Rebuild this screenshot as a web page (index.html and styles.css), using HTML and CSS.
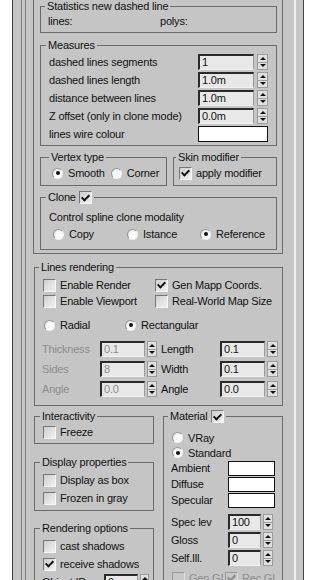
FILE: index.html
```html
<!DOCTYPE html>
<html lang="en">
<head>
    <meta charset="UTF-8">
    <title>Dashed lines</title>
    <link rel="stylesheet" href="styles.css">
</head>
<body>
<div class="frame">
  <div class="rollout">
    <div class="sheet">

      <fieldset class="grp outer">
        <fieldset class="grp stats">
          <legend>Statistics new dashed line</legend>
          <div class="stats-row"><span class="stat-lines">lines:</span><span>polys:</span></div>
        </fieldset>

        <fieldset class="grp measures">
          <legend>Measures</legend>
          <div class="row"><span class="lbl">dashed lines segments</span><span class="fld">1</span><span class="arr"><i></i><i></i></span></div>
          <div class="row"><span class="lbl">dashed lines length</span><span class="fld">1.0m</span><span class="arr"><i></i><i></i></span></div>
          <div class="row"><span class="lbl">distance between lines</span><span class="fld">1.0m</span><span class="arr"><i></i><i></i></span></div>
          <div class="row"><span class="lbl">Z offset (only in clone mode)</span><span class="fld">0.0m</span><span class="arr"><i></i><i></i></span></div>
          <div class="row"><span class="lbl">lines wire colour</span><span class="swatch wire"></span></div>
        </fieldset>

        <div class="pair">
          <fieldset class="grp vertex">
            <legend>Vertex type</legend>
            <div class="opts">
              <label class="opt smooth"><span class="rd on"></span>Smooth</label>
              <label class="opt"><span class="rd"></span>Corner</label>
            </div>
          </fieldset>
          <fieldset class="grp skin">
            <legend>Skin modifier</legend>
            <label class="chk"><span class="cb on"></span>apply modifier</label>
          </fieldset>
        </div>

        <fieldset class="grp clone">
          <legend class="leg-chk">Clone <span class="cb on"></span></legend>
          <div class="clone-text">Control spline clone modality</div>
          <div class="opts clone-opts">
            <label class="opt w74"><span class="rd"></span>Copy</label>
            <label class="opt w73"><span class="rd"></span>Istance</label>
            <label class="opt"><span class="rd on"></span>Reference</label>
          </div>
        </fieldset>
      </fieldset>

      <fieldset class="grp lines">
        <legend>Lines rendering</legend>
        <div class="two">
          <label class="chk"><span class="cb"></span>Enable Render</label>
          <label class="chk"><span class="cb on"></span>Gen Mapp Coords.</label>
          <label class="chk"><span class="cb"></span>Enable Viewport</label>
          <label class="chk"><span class="cb"></span>Real-World Map Size</label>
        </div>
        <div class="opts shape">
          <label class="opt w81"><span class="rd"></span>Radial</label>
          <label class="opt"><span class="rd on"></span>Rectangular</label>
        </div>
        <div class="dims">
          <div class="dim off"><span class="lbl">Thickness</span><span class="fld">0.1</span><span class="arr"><i></i><i></i></span></div>
          <div class="dim right"><span class="lbl">Length</span><span class="fld">0.1</span><span class="arr"><i></i><i></i></span></div>
          <div class="dim off"><span class="lbl">Sides</span><span class="fld">8</span><span class="arr"><i></i><i></i></span></div>
          <div class="dim right"><span class="lbl">Width</span><span class="fld">0.1</span><span class="arr"><i></i><i></i></span></div>
          <div class="dim off"><span class="lbl">Angle</span><span class="fld">0.0</span><span class="arr"><i></i><i></i></span></div>
          <div class="dim right"><span class="lbl">Angle</span><span class="fld">0.0</span><span class="arr"><i></i><i></i></span></div>
        </div>
      </fieldset>

      <div class="lower">
        <div class="col-left">
          <fieldset class="grp small interact">
            <legend>Interactivity</legend>
            <label class="chk"><span class="cb"></span>Freeze</label>
          </fieldset>
          <fieldset class="grp small display">
            <legend>Display properties</legend>
            <label class="chk r18"><span class="cb"></span>Display as box</label>
            <label class="chk r18"><span class="cb"></span>Frozen in gray</label>
          </fieldset>
          <fieldset class="grp small render">
            <legend>Rendering options</legend>
            <label class="chk r18"><span class="cb"></span>cast shadows</label>
            <label class="chk r18"><span class="cb on"></span>receive shadows</label>
            <div class="row r18 objid"><span class="lbl">Object ID</span><span class="fld">0</span><span class="arr"><i></i><i></i></span></div>
          </fieldset>
        </div>

        <fieldset class="grp material">
          <legend class="leg-chk">Material <span class="cb on"></span></legend>
          <label class="opt r15"><span class="rd"></span>VRay</label>
          <label class="opt r15"><span class="rd on"></span>Standard</label>
          <div class="mrow swrow"><span class="lbl">Ambient</span><span class="swatch"></span></div>
          <div class="mrow swrow"><span class="lbl">Diffuse</span><span class="swatch"></span></div>
          <div class="mrow swrow"><span class="lbl">Specular</span><span class="swatch"></span></div>
          <div class="mrow sprow first"><span class="lbl">Spec lev</span><span class="fld">100</span><span class="arr"><i></i><i></i></span></div>
          <div class="mrow sprow"><span class="lbl">Gloss</span><span class="fld">0</span><span class="arr"><i></i><i></i></span></div>
          <div class="mrow sprow"><span class="lbl">Self.Ill.</span><span class="fld">0</span><span class="arr"><i></i><i></i></span></div>
          <div class="gi">
            <label class="chk off w57"><span class="cb"></span>Gen GI</label>
            <label class="chk off"><span class="cb on"></span>Rec GI</label>
          </div>
        </fieldset>
      </div>

    </div>
  </div>
</div>
</body>
</html>
```

FILE: styles.css
```css
body {
    margin: 0;
    background: #fff;
    font-family: "Liberation Sans", Arial, sans-serif;
    font-size: 11px;
    letter-spacing: -0.2px;
    color: #111;
}
.frame {
    margin-left: 12px;
    width: 292px;
    height: 580px;
    overflow: hidden;
    box-sizing: border-box;
    background: #c5c5c5;
    border-left: 1px solid #444;
    border-right: 1px solid #444;
    padding-left: 8px;
}
.rollout {
    width: 275px;
    height: 100%;
    box-sizing: border-box;
    border-left: 1px solid #7c7c7c;
    border-right: 2px solid #efefef;
    padding-left: 3px;
}
.sheet {
    height: 100%;
    box-sizing: border-box;
    border-left: 1px solid #7c7c7c;
    padding: 0 11px 0 7px;
}

/* group boxes */
.grp {
    margin: 0;
    min-width: 0;
    border: 1px solid #6b6b6b;
    padding: 0 7px 0 8px;
}
legend {
    padding: 0 2px;
    margin-left: -3px;
    line-height: 12px;
}
.leg-chk {
    display: flex;
    align-items: center;
    gap: 3px;
    line-height: 13px;
}
.outer {
    border-top: none;
    padding: 0 5px 3px 6px;
}
.stats {
    padding: 3px 7px 4px 7px;
}
.stats-row {
    display: flex;
    height: 13px;
    line-height: 13px;
}
.stat-lines { width: 112px; }

.measures {
    margin-top: 6px;
    padding: 2px 8px 2px 8px;
}
.row {
    display: flex;
    align-items: center;
    height: 18px;
}
.row .lbl { flex: 1; }
.measures .fld { width: 56px; margin-right: 3px; }
.swatch {
    display: block;
    width: 47px;
    height: 15px;
    box-sizing: border-box;
    background: #fff;
    border: 1px solid #111;
}
.swatch.wire { width: 70px; height: 16px; }

.pair {
    display: flex;
    gap: 6px;
    margin-top: 5px;
}
.vertex {
    width: 127px;
    box-sizing: border-box;
    padding: 3px 4px 5px 11px;
}
.skin {
    width: 104px;
    box-sizing: border-box;
    padding: 3px 4px 5px 5px;
}
.opts { display: flex; }
.opt {
    display: flex;
    align-items: center;
    gap: 5px;
    height: 14px;
}
.smooth { margin-right: 6px; }
.w74 { width: 74px; }
.w73 { width: 73px; }
.w81 { width: 81px; }
.chk {
    display: flex;
    align-items: center;
    gap: 4px;
    height: 14px;
    white-space: nowrap;
}

.clone {
    margin-top: 5px;
    padding: 6px 8px 8px 8px;
}
.clone-text { height: 14px; line-height: 14px; }
.clone-opts { margin: 3px 0 0 4px; }

/* controls */
.fld {
    display: block;
    height: 16px;
    box-sizing: border-box;
    border-style: solid;
    border-width: 2px 1px 1px 2px;
    border-color: #2a2a2a #9a9a9a #f2f2f2 #2a2a2a;
    background: #e8e8e8;
    padding-left: 2px;
    line-height: 13px;
}
.arr {
    display: flex;
    flex-direction: column;
    width: 10px;
    height: 16px;
    box-sizing: border-box;
    background: #e0e0e0;
    border: 1px solid #9c9c9c;
}
.arr i {
    flex: 1;
    display: flex;
    align-items: center;
    justify-content: center;
}
.arr i::before {
    content: "";
    border-left: 3px solid transparent;
    border-right: 3px solid transparent;
    border-bottom: 3px solid #111;
}
.arr i + i { border-top: 1px solid #9c9c9c; }
.arr i + i::before {
    border-bottom: 0;
    border-top: 3px solid #111;
}
.measures .arr { width: 11px; }
.cb {
    display: flex;
    align-items: center;
    justify-content: center;
    width: 13px;
    height: 13px;
    box-sizing: border-box;
    border: 1px solid;
    border-color: #777 #f6f6f6 #f6f6f6 #777;
    background: linear-gradient(135deg, #cfcfcf, #f1f1f1);
    flex: none;
}
.cb.on::after {
    content: "";
    width: 3px;
    height: 6px;
    border: solid #111;
    border-width: 0 2px 2px 0;
    transform: rotate(45deg);
    margin-top: -2px;
}
.rd {
    display: flex;
    align-items: center;
    justify-content: center;
    width: 11px;
    height: 11px;
    box-sizing: border-box;
    border-radius: 50%;
    border: 1px solid;
    border-color: #999 #f4f4f4 #f4f4f4 #999;
    background: radial-gradient(circle at 60% 60%, #fbfbfb 40%, #dadada);
    flex: none;
}
.rd.on::after {
    content: "";
    width: 4px;
    height: 4px;
    border-radius: 50%;
    background: #111;
}

/* lines rendering */
.lines {
    margin: 7px 0 0 1px;
    padding: 4px 4px 6px 7px;
}
.two {
    display: grid;
    grid-template-columns: 112px 1fr;
    margin-left: 1px;
}
.two .chk { height: 16px; }
.shape { margin: 9px 0 0 2px; }
.dims {
    display: grid;
    grid-template-columns: 115px 117px;
    column-gap: 4px;
    margin-top: 7px;
}
.dim {
    display: flex;
    align-items: center;
    height: 20px;
}
.dim .lbl { width: 58px; }
.dim .fld { width: 45px; margin-right: 2px; }
.dim.right .lbl { width: 59px; }
.dim.right .arr { width: 11px; }
.off { color: #8c8c8c; }

/* lower part */
.lower {
    display: flex;
    gap: 9px;
    margin: 4px 0 0 1px;
}
.col-left { width: 120px; }
.small {
    width: 120px;
    box-sizing: border-box;
    padding: 3px 4px 3px 8px;
}
.interact { padding-bottom: 4px; }
.display { margin-top: 12px; }
.render { margin-top: 11px; }
.r18 { height: 18px; }
.objid { margin-left: -1px; }
.objid .lbl { flex: none; width: 62px; }
.objid .fld { width: 34px; margin-right: 2px; }
.objid .arr { width: 9px; }

.material {
    width: 120px;
    box-sizing: border-box;
    padding: 7px 7px 0 7px;
}
.r15 { height: 15px; margin-left: 1px; }
.mrow {
    display: flex;
    align-items: center;
}
.mrow .lbl { width: 57px; }
.swrow { height: 16px; }
.sprow { height: 18px; }
.sprow.first { margin-top: 5px; }
.sprow .fld { width: 33px; margin-right: 2px; }
.gi {
    display: flex;
    margin: 4px 0 0 1px;
}
.w57 { width: 57px; }
.chk.off .cb { background: #c8c8c8; border-color: #999 #ddd #ddd #999; }
.chk.off .cb.on::after { border-color: #8c8c8c; }
```
